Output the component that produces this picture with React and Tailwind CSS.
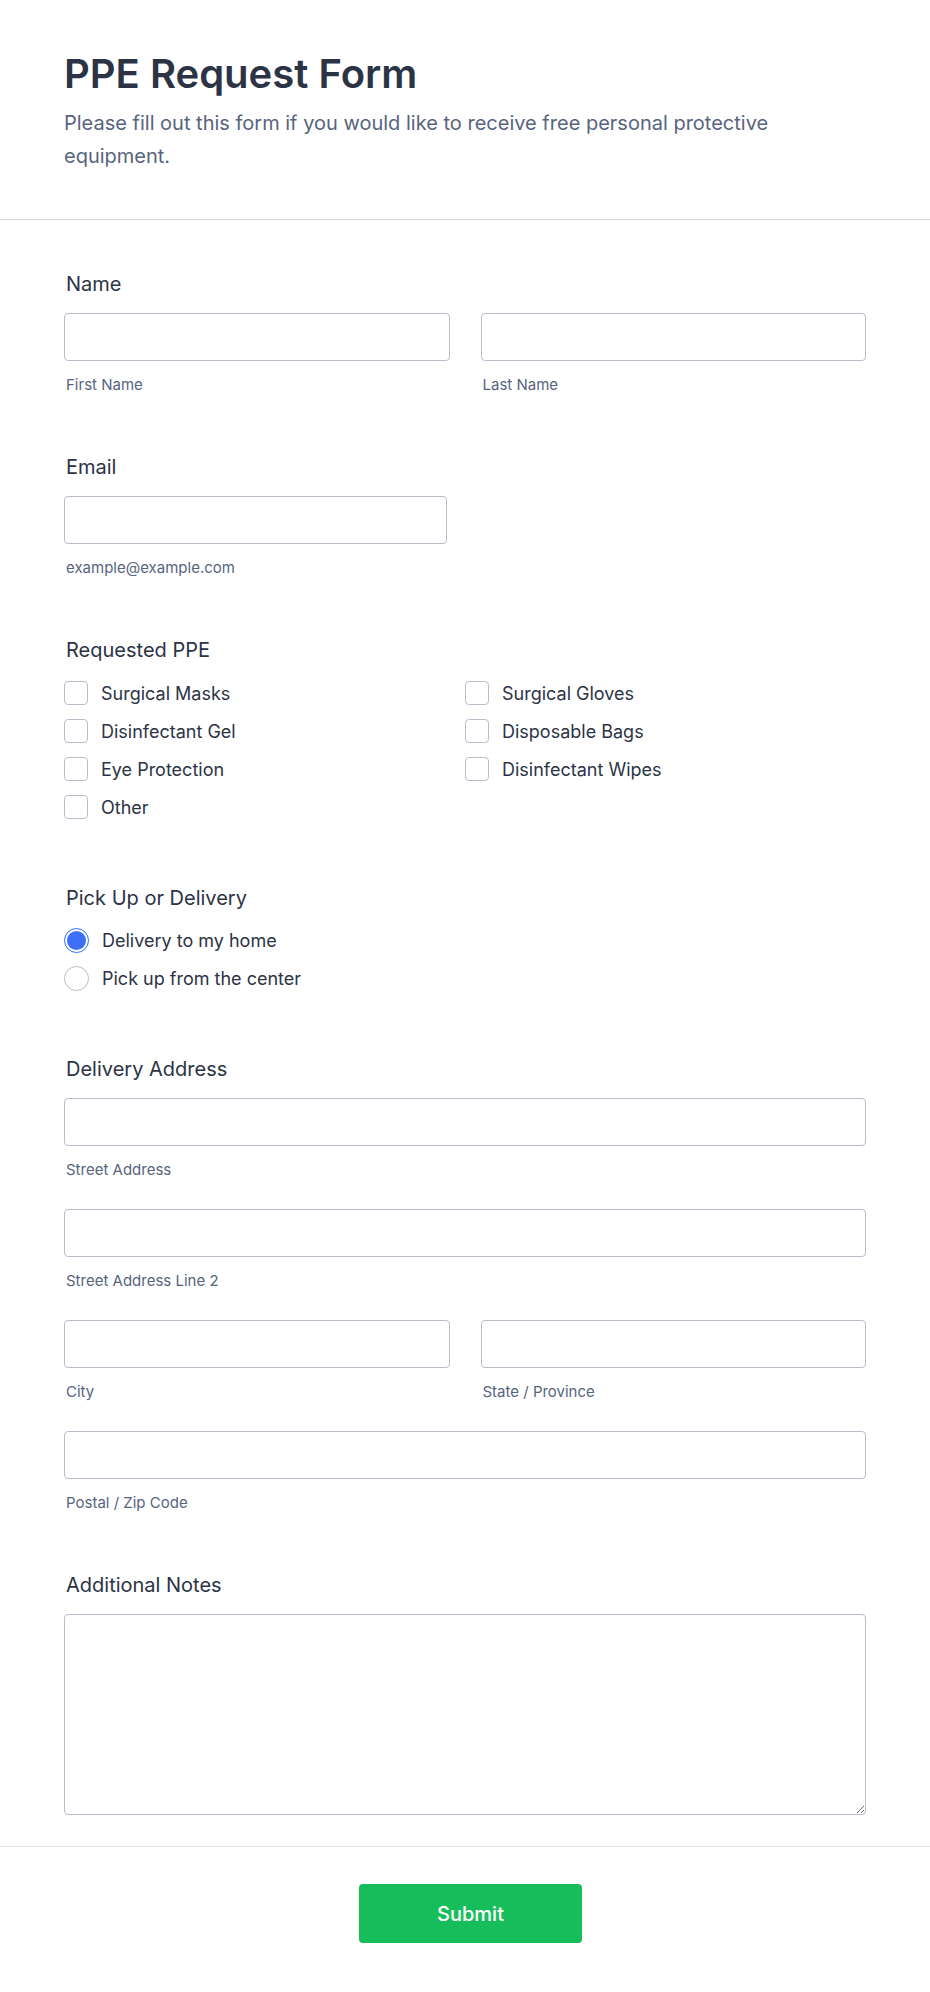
import { useState } from "react";

const PPE_OPTIONS = [
  "Surgical Masks",
  "Surgical Gloves",
  "Disinfectant Gel",
  "Disposable Bags",
  "Eye Protection",
  "Disinfectant Wipes",
  "Other",
];

function Label({ children }) {
  return <label className="block pl-[2px] text-[20px] leading-[28px] font-normal text-[#2c3345]">{children}</label>;
}

function TextInput({ sub }) {
  return (
    <div>
      <input
        type="text"
        className="block w-full h-[48px] rounded-[4px] border border-[#b8bdc9] bg-white px-3 text-[18px] text-[#2c3345] outline-none"
      />
      <div className="mt-[14px] pl-[2px] text-[15px] leading-[20px] text-[#57647e]">{sub}</div>
    </div>
  );
}

export default function App() {
  const [checked, setChecked] = useState({});
  const [delivery, setDelivery] = useState("home");

  return (
    <div className="min-h-screen bg-white" style={{ fontFamily: "Inter, 'Noto Sans', sans-serif" }}>
      {/* Header */}
      <div className="border-b border-[#d3d6de] px-[64px] pt-[50px] pb-[46px]">
        <h1 className="text-[40px] leading-[48px] font-semibold text-[#2c3345]">PPE Request Form</h1>
        <p className="mt-[9px] text-[20px] leading-[33px] text-[#57647e] max-w-[780px]">
          Please fill out this form if you would like to receive free personal protective equipment.
        </p>
      </div>

      {/* Fields */}
      <div className="flex flex-col gap-[58px] px-[64px] pt-[50px] pb-[31px]">
        <div>
          <Label>Name</Label>
          <div className="mt-[15px] grid grid-cols-2 gap-[31px]">
            <TextInput sub="First Name" />
            <TextInput sub="Last Name" />
          </div>
        </div>

        <div>
          <Label>Email</Label>
          <div className="mt-[15px] w-[383px]">
            <TextInput sub="example@example.com" />
          </div>
        </div>

        <div>
          <Label>Requested PPE</Label>
          <div className="mt-[10px] grid grid-cols-2">
            {PPE_OPTIONS.map((opt) => (
              <label key={opt} className="flex h-[38px] items-center gap-[13px] cursor-pointer">
                <span
                  onClick={() => setChecked((c) => ({ ...c, [opt]: !c[opt] }))}
                  className={
                    "flex h-[24px] w-[24px] items-center justify-center rounded-[4px] border " +
                    (checked[opt] ? "border-[#2e69ff] bg-[#2e69ff]" : "border-[#b8bdc9] bg-white")
                  }
                >
                  {checked[opt] && (
                    <svg width="14" height="14" viewBox="0 0 24 24" fill="none" stroke="white" strokeWidth="3">
                      <path d="M5 12l5 5L20 7" />
                    </svg>
                  )}
                </span>
                <span className="text-[18px] text-[#2c3345]">{opt}</span>
              </label>
            ))}
          </div>
        </div>

        <div>
          <Label>Pick Up or Delivery</Label>
          <div className="mt-[9px] flex flex-col">
            {[
              ["home", "Delivery to my home"],
              ["center", "Pick up from the center"],
            ].map(([val, text]) => (
              <label key={val} className="flex h-[38px] items-center gap-[13px] cursor-pointer" onClick={() => setDelivery(val)}>
                <span
                  className={
                    "flex h-[25px] w-[25px] items-center justify-center rounded-full border " +
                    (delivery === val ? "border-[#2e69ff]" : "border-[#b8bdc9]")
                  }
                >
                  {delivery === val && <span className="h-[19px] w-[19px] rounded-full bg-[#3e6ff8]" />}
                </span>
                <span className="text-[18px] text-[#2c3345]">{text}</span>
              </label>
            ))}
          </div>
        </div>

        <div>
          <Label>Delivery Address</Label>
          <div className="mt-[15px] flex flex-col gap-[29px]">
            <TextInput sub="Street Address" />
            <TextInput sub="Street Address Line 2" />
            <div className="grid grid-cols-2 gap-[31px]">
              <TextInput sub="City" />
              <TextInput sub="State / Province" />
            </div>
            <TextInput sub="Postal / Zip Code" />
          </div>
        </div>

        <div>
          <Label>Additional Notes</Label>
          <textarea className="mt-[15px] block h-[201px] w-full rounded-[4px] border border-[#b8bdc9] bg-white p-3 text-[18px] text-[#2c3345] outline-none" />
        </div>
      </div>

      {/* Footer */}
      <div className="flex justify-center border-t border-[#e3e5ea] pt-[37px] pb-[50px] pl-[11px]">
        <button className="h-[59px] w-[223px] rounded-[4px] bg-[#18bd5b] text-[20px] font-medium text-white">Submit</button>
      </div>
    </div>
  );
}
